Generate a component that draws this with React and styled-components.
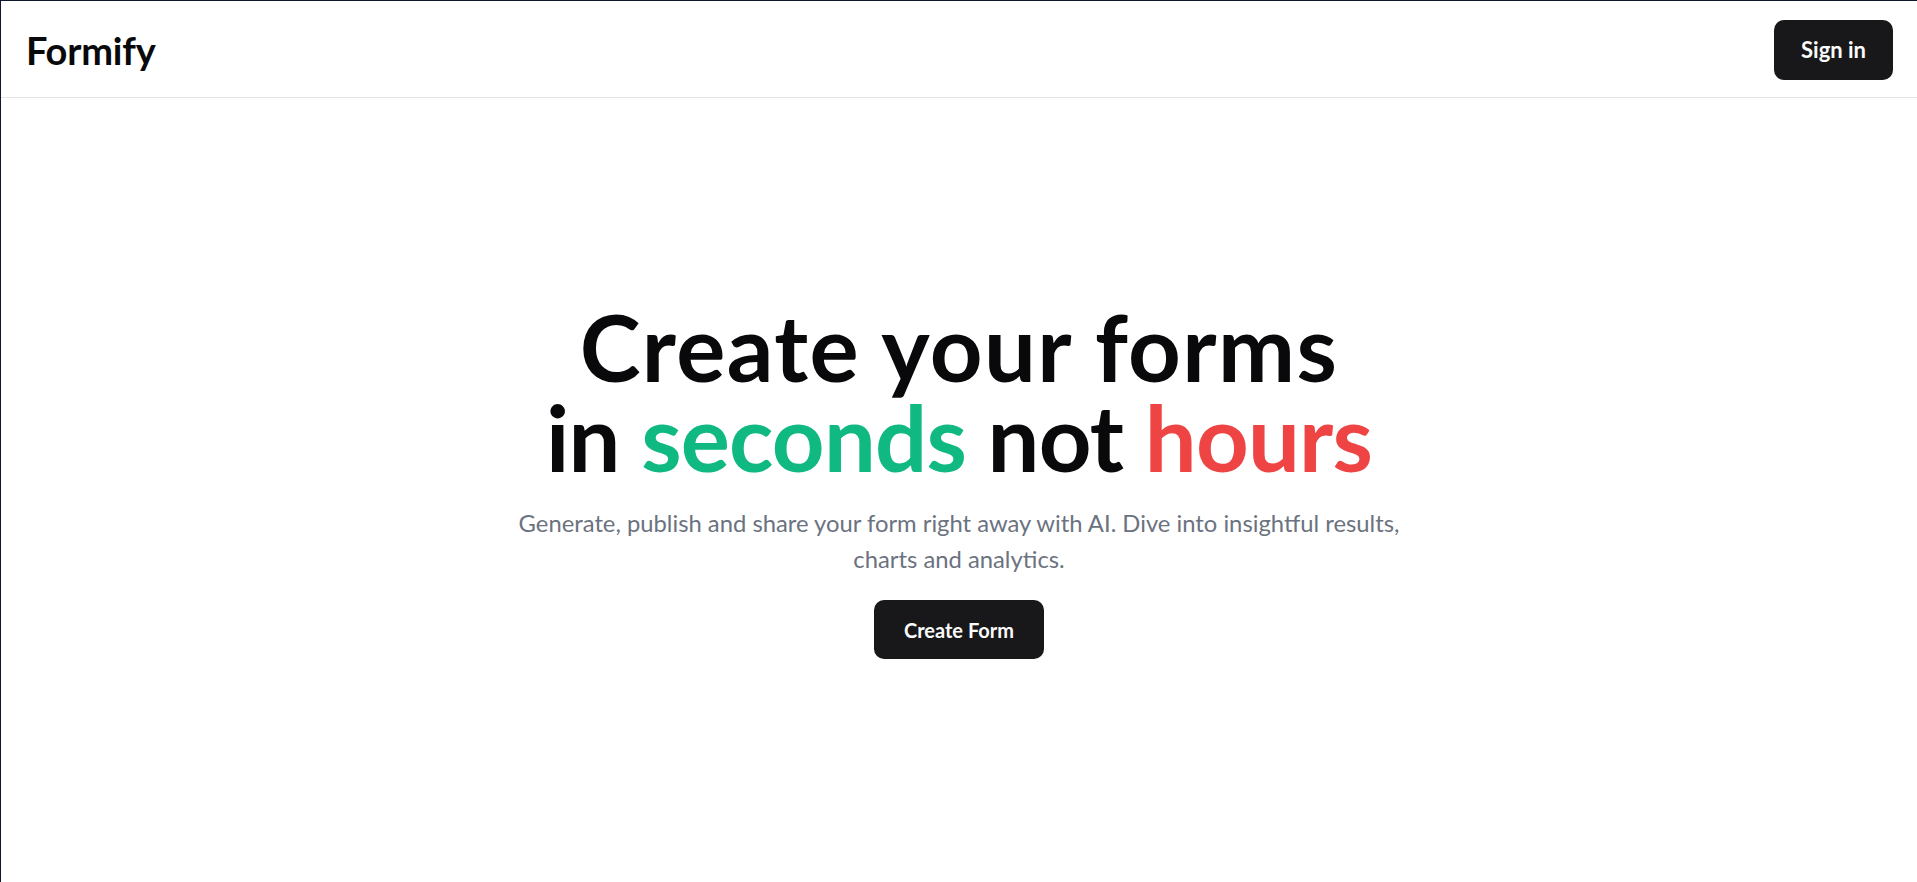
import React from "react";
import styled, { createGlobalStyle } from "styled-components";

const Global = createGlobalStyle`
  html, body { margin: 0; padding: 0; background: #ffffff; }
  body { font-family: "Lato", "Inter", "Liberation Sans", sans-serif; color: #09090b; -webkit-font-smoothing: antialiased; }
  * { box-sizing: border-box; }
`;

const Page = styled.div`
  min-height: 100vh;
  display: flex;
  flex-direction: column;
  border-top: 1px solid #0f172a;
  border-left: 1px solid #0f172a;
`;

const Header = styled.header`
  height: 97px;
  flex-shrink: 0;
  display: flex;
  align-items: center;
  justify-content: space-between;
  padding: 1px 24px 0;
  border-bottom: 1px solid #e4e4e7;
`;

const Logo = styled.div`
  font-size: 38px;
  font-weight: 700;
  letter-spacing: -0.2px;
  color: #09090b;
  padding-left: 1px;
`;

const DarkButton = styled.button`
  font-family: inherit;
  background: #18181b;
  color: #fafafa;
  border: none;
  border-radius: 10px;
  height: ${(p) => (p.$size === "lg" ? "60px" : "59px")};
  padding: 0 ${(p) => (p.$size === "lg" ? "27px" : "30px")};
  font-size: ${(p) => (p.$size === "lg" ? "22px" : "20px")};
  font-weight: 700;
  cursor: pointer;
`;

const Main = styled.main`
  flex: 1;
  display: flex;
  flex-direction: column;
  align-items: center;
  justify-content: center;
  padding-bottom: 19px;
  text-align: center;
`;

const Headline = styled.h1`
  margin: 0;
  font-size: 92px;
  line-height: 90px;
  font-weight: 700;
  color: #09090b;
`;

const HeadLine = styled.span`
  display: block;
  letter-spacing: ${(p) => p.$tracking};
`;

const Accent = styled.span`
  color: ${(p) => p.$color};
`;

const Subtitle = styled.p`
  margin: 23px 0 0;
  max-width: 900px;
  font-size: 23.8px;
  line-height: 36px;
  color: #6b7280;
`;

const Actions = styled.div`
  margin-top: 23px;
  display: flex;
  justify-content: center;
`;

export default function App() {
  return (
    <>
      <Global />
      <Page>
        <Header>
          <Logo>Formify</Logo>
          <DarkButton $size="lg">Sign in</DarkButton>
        </Header>
        <Main>
          <Headline>
            <HeadLine $tracking="1.4px">Create your forms</HeadLine>
            <HeadLine $tracking="-0.8px">
              in <Accent $color="#10b981">seconds</Accent> not{" "}
              <Accent $color="#ef4444">hours</Accent>
            </HeadLine>
          </Headline>
          <Subtitle>
            Generate, publish and share your form right away with AI. Dive into insightful results, charts and analytics.
          </Subtitle>
          <Actions>
            <DarkButton>Create Form</DarkButton>
          </Actions>
        </Main>
      </Page>
    </>
  );
}
